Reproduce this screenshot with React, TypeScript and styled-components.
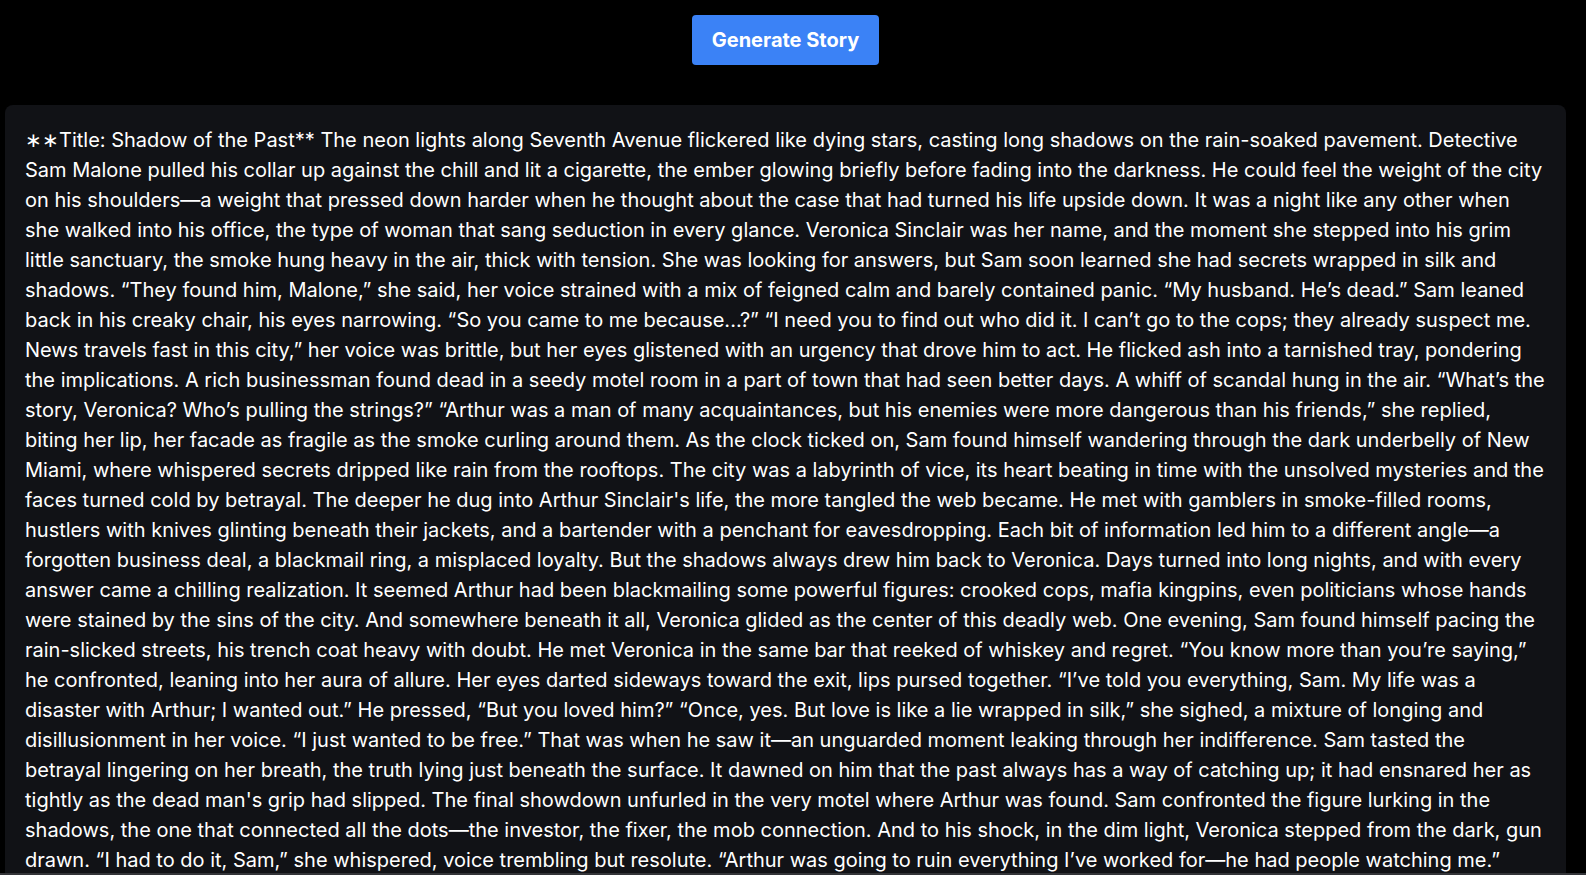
import React from 'react'
import styled, { createGlobalStyle } from 'styled-components'

const GlobalStyle = createGlobalStyle`
  html, body {
    margin: 0;
    padding: 0;
    background: #000;
    overflow: hidden;
  }
  body {
    font-family: Inter, 'Noto Sans', 'Liberation Sans', sans-serif;
    color: #fff;
  }
`

const Page = styled.div`
  display: flex;
  flex-direction: column;
  align-items: center;
  gap: 40px;
  padding: 15px 20px 0 5px;
  min-height: 100vh;
  box-sizing: border-box;
`

const GenerateButton = styled.button`
  background: #3b82f6;
  color: #fff;
  border: none;
  border-radius: 4px;
  padding: 11px 20px;
  font-family: Inter, 'Liberation Sans', sans-serif;
  font-size: 20px;
  line-height: 28px;
  font-weight: 700;
  cursor: pointer;

  &:hover {
    background: #2563eb;
  }
`

const StoryCard = styled.div`
  align-self: stretch;
  background: #111216;
  border-radius: 8px;
  padding: 20px;
`

const StoryText = styled.p`
  margin: 0;
  font-size: 20px;
  line-height: 30px;
  color: #fff;
  white-space: pre-wrap;
`

const BottomEdge = styled.div`
  position: fixed;
  left: 0;
  right: 0;
  bottom: 0;
  height: 2px;
  background: #333438;
`

const story =
  '\u2217\u2217Title: Shadow of the Past** The neon lights along Seventh Avenue flickered like dying stars, casting long shadows on the rain-soaked pavement. Detective Sam Malone pulled his collar up against the chill and lit a cigarette, the ember glowing briefly before fading into the darkness. He could feel the weight of the city on his shoulders—a weight that pressed down harder when he thought about the case that had turned his life upside down. It was a night like any other when she walked into his office, the type of woman that sang seduction in every glance. Veronica Sinclair was her name, and the moment she stepped into his grim little sanctuary, the smoke hung heavy in the air, thick with tension. She was looking for answers, but Sam soon learned she had secrets wrapped in silk and shadows. “They found him, Malone,” she said, her voice strained with a mix of feigned calm and barely contained panic. “My husband. He’s dead.” Sam leaned back in his creaky chair, his eyes narrowing. “So you came to me because...?” “I need you to find out who did it. I can’t go to the cops; they already suspect me. News travels fast in this city,” her voice was brittle, but her eyes glistened with an urgency that drove him to act. He flicked ash into a tarnished tray, pondering the implications. A rich businessman found dead in a seedy motel room in a part of town that had seen better days. A whiff of scandal hung in the air. “What’s the story, Veronica? Who’s pulling the strings?” “Arthur was a man of many acquaintances, but his enemies were more dangerous than his friends,” she replied, biting her lip, her facade as fragile as the smoke curling around them. As the clock ticked on, Sam found himself wandering through the dark underbelly of New Miami, where whispered secrets dripped like rain from the rooftops. The city was a labyrinth of vice, its heart beating in time with the unsolved mysteries and the faces turned cold by betrayal. The deeper he dug into Arthur Sinclair\'s life, the more tangled the web became. He met with gamblers in smoke-filled rooms, hustlers with knives glinting beneath their jackets, and a bartender with a penchant for eavesdropping. Each bit of information led him to a different angle—a forgotten business deal, a blackmail ring, a misplaced loyalty. But the shadows always drew him back to Veronica. Days turned into long nights, and with every answer came a chilling realization. It seemed Arthur had been blackmailing some powerful figures: crooked cops, mafia kingpins, even politicians whose hands were stained by the sins of the city. And somewhere beneath it all, Veronica glided as the center of this deadly web. One evening, Sam found himself pacing the rain-slicked streets, his trench coat heavy with doubt. He met Veronica in the same bar that reeked of whiskey and regret. “You know more than you’re saying,” he confronted, leaning into her aura of allure. Her eyes darted sideways toward the exit, lips pursed together. “I’ve told you everything, Sam. My life was a disaster with Arthur; I wanted out.” He pressed, “But you loved him?” “Once, yes. But love is like a lie wrapped in silk,” she sighed, a mixture of longing and disillusionment in her voice. “I just wanted to be free.” That was when he saw it—an unguarded moment leaking through her indifference. Sam tasted the betrayal lingering on her breath, the truth lying just beneath the surface. It dawned on him that the past always has a way of catching up; it had ensnared her as tightly as the dead man\'s grip had slipped. The final showdown unfurled in the very motel where Arthur was found. Sam confronted the figure lurking in the shadows, the one that connected all the dots—the investor, the fixer, the mob connection. And to his shock, in the dim light, Veronica stepped from the dark, gun drawn. “I had to do it, Sam,” she whispered, voice trembling but resolute. “Arthur was going to ruin everything I’ve worked for—he had people watching me.” Sam held her gaze, the rain drumming against the windows like a countdown. He knew the past never stayed buried in this city; it only waited for the right night to climb back out.'

export default function App() {
  return (
    <>
      <GlobalStyle />
      <Page>
        <GenerateButton type="button">Generate Story</GenerateButton>
        <StoryCard>
          <StoryText>{story}</StoryText>
        </StoryCard>
      </Page>
      <BottomEdge />
    </>
  )
}
